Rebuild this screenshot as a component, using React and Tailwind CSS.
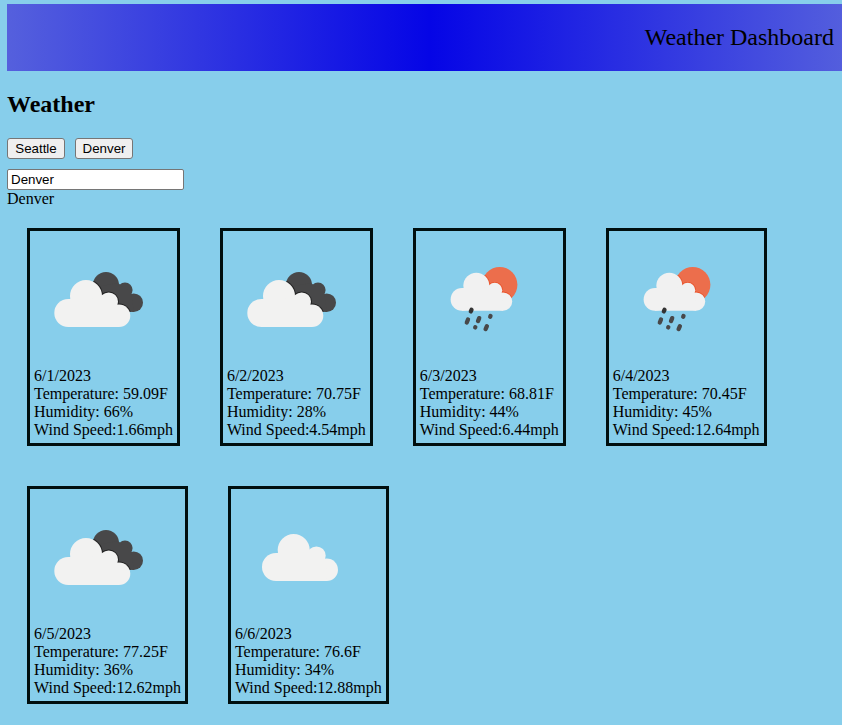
import { useId, useState } from "react";

const FORECAST = [
  { date: "6/1/2023", temp: "59.09", humidity: 66, wind: "1.66", icon: "broken" },
  { date: "6/2/2023", temp: "70.75", humidity: 28, wind: "4.54", icon: "broken" },
  { date: "6/3/2023", temp: "68.81", humidity: 44, wind: "6.44", icon: "rain" },
  { date: "6/4/2023", temp: "70.45", humidity: 45, wind: "12.64", icon: "rain" },
  { date: "6/5/2023", temp: "77.25", humidity: 36, wind: "12.62", icon: "broken" },
  { date: "6/6/2023", temp: "76.6", humidity: 34, wind: "12.88", icon: "cloud" },
];

function CloudShape(props) {
  return (
    <g {...props}>
      <circle cx="34.3" cy="78" r="14" />
      <circle cx="52" cy="61" r="16" />
      <circle cx="74.7" cy="66.7" r="9.3" />
      <circle cx="85" cy="80.7" r="11.3" />
      <path d="M34.3 92V64H52L74.7 62L84 72L85 92Z" />
    </g>
  );
}

function BackCloud() {
  return (
    <>
      <circle cx="72" cy="50" r="13" />
      <circle cx="91" cy="55" r="7.6" />
      <circle cx="99.7" cy="67.7" r="9.3" />
      <path d="M62 52L84 48L97 58L100 77L84 76Z" />
    </>
  );
}

function WeatherIcon({ kind }) {
  const id = useId();
  return (
    <svg width="128" height="132" viewBox="0 0 128 132" className="block">
      {kind === "broken" && (
        <>
          <clipPath id={id}>
            <BackCloud />
          </clipPath>
          <g fill="#484849">
            <BackCloud />
          </g>
          <g clipPath={`url(#${id})`}>
            <CloudShape fill="#222" stroke="#222" strokeWidth="2" />
          </g>
          <CloudShape fill="#f2f2f1" />
        </>
      )}
      {kind === "cloud" && <CloudShape fill="#f2f2f1" transform="translate(6.7 -4)" />}
      {kind === "rain" && (
        <>
          <clipPath id={id}>
            <circle cx="79.7" cy="49.7" r="17.7" />
          </clipPath>
          <circle cx="79.7" cy="49.7" r="17.7" fill="#ec6e4c" />
          <g clipPath={`url(#${id})`}>
            <CloudShape fill="#e9542c" stroke="#e9542c" strokeWidth="2" transform="translate(14.2 1.2) scale(.81)" />
          </g>
          <CloudShape fill="#f1f1f1" transform="translate(14.2 1.2) scale(.81)" />
          <g stroke="#484849" strokeWidth="4.3" strokeLinecap="round">
            <path d="M51.5 74.8L50.8 76.4" stroke="#333" />
            <path d="M48 84.5L46.8 87.5" />
            <path d="M59.2 83.1L58 86.1" />
            <path d="M70.5 80.9L70.2 81.7" />
            <path d="M55.3 92.2L55.2 92.4" />
            <path d="M66.9 91.2L65.6 94.1" />
          </g>
        </>
      )}
    </svg>
  );
}

function CityButton({ children, onClick }) {
  return (
    <button
      onClick={onClick}
      className="h-[21px] w-[58px] rounded-[3px] border border-[#767676] bg-[#efefef] text-center font-['Liberation_Sans',Arial,sans-serif] text-[13.333px] leading-[19px]"
    >
      {children}
    </button>
  );
}

function DayCard({ day }) {
  return (
    <div className="m-5 border-3 border-[#000f0f] p-1 whitespace-nowrap">
      <WeatherIcon kind={day.icon} />
      <p>{day.date}</p>
      <p>Temperature: {day.temp}F</p>
      <p>Humidity: {day.humidity}%</p>
      <p>Wind Speed:{day.wind}mph</p>
    </div>
  );
}

export default function App() {
  const [city, setCity] = useState("Denver");
  return (
    <div className="h-[725px] overflow-hidden bg-[#87ceeb] pt-1 pl-[7px] font-['Liberation_Serif','Times_New_Roman',serif] text-base leading-[18px] text-black">
      <header className="h-[67px] bg-[linear-gradient(90deg,#5560dd_0%,#0505e6_50.6%,#5560dd_101.2%)] py-5 pr-2 text-right text-2xl leading-[27px]">
        Weather Dashboard
      </header>
      <main>
        <h1 className="mt-5 text-2xl leading-[27px] font-bold">Weather</h1>
        <div className="mt-5 flex gap-2.5">
          <CityButton onClick={() => setCity("Seattle")}>Seattle</CityButton>
          <CityButton onClick={() => setCity("Denver")}>Denver</CityButton>
        </div>
        <input
          value={city}
          onChange={(e) => setCity(e.target.value)}
          className="mt-2.5 block h-[21px] w-[177px] rounded-[2px] border border-[#767676] bg-white px-[3px] font-['Liberation_Sans',Arial,sans-serif] text-[13.333px]"
        />
        <p>{city}</p>
        <section className="flex flex-wrap items-start">
          {FORECAST.map((day) => (
            <DayCard key={day.date} day={day} />
          ))}
        </section>
      </main>
    </div>
  );
}
